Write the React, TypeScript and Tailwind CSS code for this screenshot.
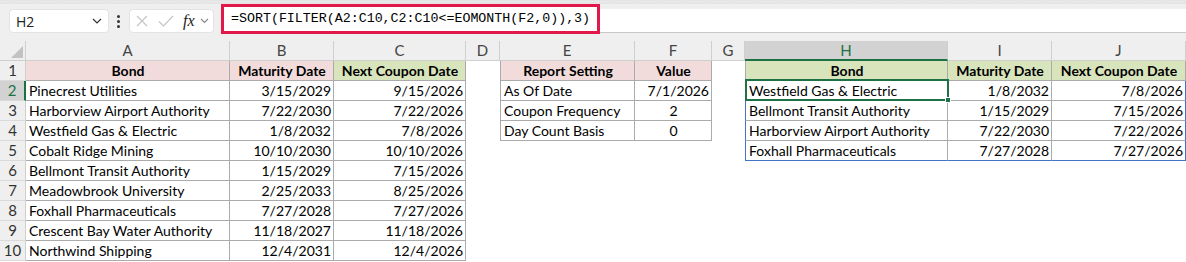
import React from "react";

type Cell = {
  t?: string;
  a?: "l" | "r" | "c";
  b?: boolean;
  bg?: string;
  cls?: string;
};

const PINK = "bg-[#f2dcdb]";
const GREEN = "bg-[#d8e4bc]";
const G = "border-[#ababab]";

const cols = ["A", "B", "C", "D", "E", "F", "G", "H", "I", "J"];

const left = [
  ["Pinecrest Utilities", "3/15/2029", "9/15/2026"],
  ["Harborview Airport Authority", "7/22/2030", "7/22/2026"],
  ["Westfield Gas & Electric", "1/8/2032", "7/8/2026"],
  ["Cobalt Ridge Mining", "10/10/2030", "10/10/2026"],
  ["Bellmont Transit Authority", "1/15/2029", "7/15/2026"],
  ["Meadowbrook University", "2/25/2033", "8/25/2026"],
  ["Foxhall Pharmaceuticals", "7/27/2028", "7/27/2026"],
  ["Crescent Bay Water Authority", "11/18/2027", "11/18/2026"],
  ["Northwind Shipping", "12/4/2031", "12/4/2026"],
];

const settings = [
  ["As Of Date", "7/1/2026", "r"],
  ["Coupon Frequency", "2", "c"],
  ["Day Count Basis", "0", "c"],
];

const out = [
  ["Westfield Gas & Electric", "1/8/2032", "7/8/2026"],
  ["Bellmont Transit Authority", "1/15/2029", "7/15/2026"],
  ["Harborview Airport Authority", "7/22/2030", "7/22/2026"],
  ["Foxhall Pharmaceuticals", "7/27/2028", "7/27/2026"],
];

function buildRows(): Cell[][] {
  const rows: Cell[][] = [];
  rows.push([
    { t: "Bond", a: "c", b: true, bg: PINK, cls: `border-r border-b ${G}` },
    { t: "Maturity Date", a: "c", b: true, bg: PINK, cls: `border-r border-b ${G}` },
    { t: "Next Coupon Date", a: "c", b: true, bg: GREEN, cls: `border-r border-b ${G}` },
    {},
    { t: "Report Setting", a: "c", b: true, bg: PINK, cls: `border-l border-r border-b ${G}` },
    { t: "Value", a: "c", b: true, bg: PINK, cls: `border-r border-b ${G}` },
    {},
    { t: "Bond", a: "c", b: true, bg: GREEN, cls: `border-l border-r border-b ${G}` },
    { t: "Maturity Date", a: "c", b: true, bg: GREEN, cls: `border-r border-b ${G}` },
    { t: "Next Coupon Date", a: "c", b: true, bg: GREEN, cls: `border-r border-b ${G}` },
  ]);
  for (let i = 0; i < 9; i++) {
    const r: Cell[] = [];
    const d = left[i];
    r.push({ t: d[0], a: "l", cls: `border-r border-b ${G}` });
    r.push({ t: d[1], a: "r", cls: `border-r border-b ${G}` });
    r.push({ t: d[2], a: "r", cls: `border-r border-b ${G}` });
    r.push({});
    if (i < 3) {
      const s = settings[i];
      r.push({ t: s[0], a: "l", cls: `border-l border-r border-b ${G}` });
      r.push({ t: s[1], a: s[2] as "r" | "c", cls: `border-r border-b ${G}` });
    } else {
      r.push({});
      r.push({});
    }
    r.push({});
    if (i < 4) {
      const o = out[i];
      const last = i === 3;
      const bb = last ? "border-b-[#4472c4]" : "border-b-[#ababab]";
      r.push({ t: o[0], a: "l", cls: `border-l border-r border-b border-l-[#4472c4] border-r-[#ababab] ${bb}` });
      r.push({ t: o[1], a: "r", cls: `border-r border-b border-r-[#ababab] ${bb}` });
      r.push({ t: o[2], a: "r", cls: `border-r border-b border-r-[#4472c4] ${bb}` });
    } else {
      r.push({});
      r.push({});
      r.push({});
    }
    rows.push(r);
  }
  return rows;
}

const gridCols = "grid grid-cols-[26px_204px_104px_132px_34px_135px_77px_33px_203px_104px_134px]";

export default function App() {
  const rows = buildRows();
  return (
    <div className="w-[1186px] h-[262px] bg-white overflow-hidden relative" style={{ fontFamily: "Lato, 'Liberation Sans', sans-serif" }}>
      <div className="h-[4px] bg-[#e5e5e5] bg-[radial-gradient(#f2f2f2_0.6px,transparent_0.7px)] bg-[length:3px_3px]" />
      <div className="h-[30px] bg-[#efefef] flex items-start">
        <div className="ml-[9px] mt-[5px] w-[100px] h-[24px] bg-white rounded-[4px] border border-[#e3e3e3] flex items-center justify-between pl-[6px] pr-[6px]">
          <span className="text-[14px] text-[#222]" style={{ fontFamily: "'Open Sans', sans-serif" }}>H2</span>
          <svg width="10" height="6" viewBox="0 0 10 6"><path d="M1 1l4 4 4-4" fill="none" stroke="#333" strokeWidth="1.2" /></svg>
        </div>
        <div className="ml-[8px] mt-[11px] flex flex-col gap-[2px]">
          <span className="w-[3px] h-[3px] bg-[#333] rounded-full" />
          <span className="w-[3px] h-[3px] bg-[#333] rounded-full" />
          <span className="w-[3px] h-[3px] bg-[#333] rounded-full" />
        </div>
        <div className="ml-[9px] mt-[5px] w-[85px] h-[24px] bg-white rounded-[4px] border border-[#e3e3e3] flex items-center pl-[6px]">
          <svg width="12" height="12" viewBox="0 0 12 12"><path d="M1 1l10 10M11 1L1 11" stroke="#c4c4c4" strokeWidth="1.1" /></svg>
          <svg className="ml-[10px]" width="16" height="12" viewBox="0 0 16 12"><path d="M1 6.5l4.5 4.5L15 1" fill="none" stroke="#c4c4c4" strokeWidth="1.1" /></svg>
          <span className="ml-[9px] text-[16px] italic text-[#222] leading-none" style={{ fontFamily: "'Liberation Serif', serif" }}>fx</span>
          <svg className="ml-[5px]" width="9" height="6" viewBox="0 0 9 6"><path d="M1 1l3.5 3.5L8 1" fill="none" stroke="#888" strokeWidth="1.1" /></svg>
        </div>
        <div className="ml-[7px] w-[379px] h-[30px] border-[3px] border-[#e0194a] bg-white flex items-center pl-[7px]">
          <span className="text-[13.3px] text-black" style={{ fontFamily: "'Liberation Mono', monospace" }}>=SORT(FILTER(A2:C10,C2:C10&lt;=EOMONTH(F2,0)),3)</span>
        </div>
        <div className="flex-1 mt-[5px] h-[24px] bg-white border-b border-[#c8c8c8]" />
      </div>
      <div className="h-[7px] bg-[#efefef]" />
      <div className={`${gridCols} h-[20px] bg-[#efefef]`}>
        <div className="border-r border-b border-[#cfcfcf] relative">
          <svg className="absolute right-[2px] bottom-[2px]" width="12" height="12" viewBox="0 0 12 12"><path d="M12 0L12 12L0 12Z" fill="#c2c2c2" /></svg>
        </div>
        {cols.map((c) =>
          c === "H" ? (
            <div key={c} className="border-r border-[#cfcfcf] border-b-2 border-b-[#1e7145] bg-[#d2d2d2] text-[#1e7145] text-[15px] flex items-center justify-center leading-none">
              {c}
            </div>
          ) : (
            <div key={c} className="border-r border-b border-[#cfcfcf] text-[#444] text-[15px] flex items-center justify-center leading-none">
              {c}
            </div>
          )
        )}
      </div>
      {rows.map((r, i) => (
        <div key={i} className={`${gridCols} h-[20px]`}>
          {i === 1 ? (
            <div className="bg-[#d2d2d2] border-r-2 border-r-[#1e7145] border-b border-b-[#dadada] text-[#1e7145] text-[15px] flex items-center justify-center leading-none">
              {i + 1}
            </div>
          ) : (
            <div className="bg-[#efefef] border-r border-r-[#cfcfcf] border-b border-b-[#dadada] text-[#333] text-[15px] flex items-center justify-center leading-none">
              {i + 1}
            </div>
          )}
          {r.map((c, j) => (
            <div
              key={j}
              className={`h-[20px] flex items-center overflow-hidden whitespace-nowrap text-[14px] text-black leading-none pl-[3px] pr-[2px] pt-[1px] ${c.bg ?? ""} ${c.cls ?? ""} ${
                c.a === "r" ? "justify-end" : c.a === "c" ? "justify-center" : "justify-start"
              } ${c.b ? "font-bold" : ""}`}
            >
              {c.t}
            </div>
          ))}
        </div>
      ))}
      <div className="absolute left-[745px] top-[79px] w-[204px] h-[22px] border-2 border-[#1e7145] pointer-events-none">
        <div className="absolute right-[-4px] bottom-[-4px] w-[6px] h-[6px] bg-[#1e7145] border border-white" />
      </div>
    </div>
  );
}
